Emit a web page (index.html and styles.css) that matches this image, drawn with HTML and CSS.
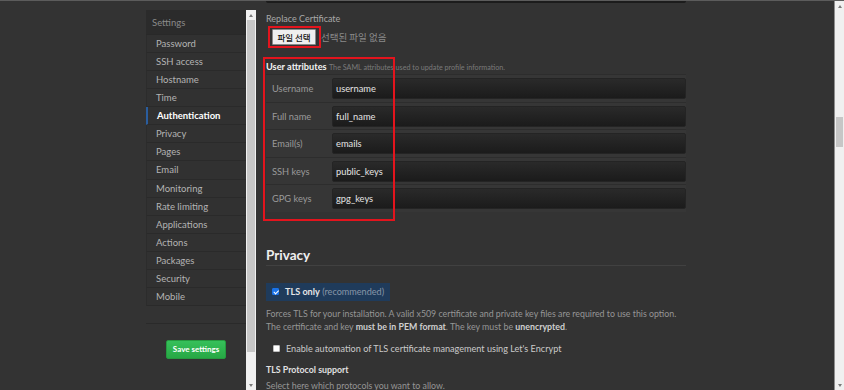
FILE: index.html
```html
<!DOCTYPE html>
<html lang="en">
<head>
<meta charset="utf-8">
<title>Settings - Authentication</title>
<link rel="stylesheet" href="styles.css">
</head>
<body>
<div class="page">
  <div class="main">
    <div class="gutter"></div>
    <aside class="side">
      <nav class="menu">
        <div class="menu-head">Settings</div>
        <a class="item">Password</a>
        <a class="item">SSH access</a>
        <a class="item">Hostname</a>
        <a class="item">Time</a>
        <a class="item active">Authentication</a>
        <a class="item">Privacy</a>
        <a class="item">Pages</a>
        <a class="item">Email</a>
        <a class="item">Monitoring</a>
        <a class="item">Rate limiting</a>
        <a class="item">Applications</a>
        <a class="item">Actions</a>
        <a class="item">Packages</a>
        <a class="item">Security</a>
        <a class="item">Mobile</a>
      </nav>
      <div class="side-foot"><button class="save">Save settings</button></div>
    </aside>
    <div class="sbar sbar-side">
      <div class="sbar-btn"><span class="tri up"></span></div>
      <div class="sbar-thumb side-thumb"></div>
      <div class="sbar-track"></div>
      <div class="sbar-btn"><span class="tri down"></span></div>
    </div>
    <section class="content">
      <div class="prev-input"></div>
      <div class="field-label">Replace Certificate</div>
      <div class="file-row">
        <span class="mark-box"><button class="file-btn">파일 선택</button></span>
        <span class="file-none">선택된 파일 없음</span>
      </div>
      <div class="attrs">
        <div class="attrs-title"><strong>User attributes</strong> <span class="note">The SAML attributes used to update profile information.</span></div>
        <div class="attr-row"><span class="attr-label">Username</span><span class="attr-input">username</span></div>
        <div class="attr-row"><span class="attr-label">Full name</span><span class="attr-input">full_name</span></div>
        <div class="attr-row"><span class="attr-label">Email(s)</span><span class="attr-input">emails</span></div>
        <div class="attr-row"><span class="attr-label">SSH keys</span><span class="attr-input">public_keys</span></div>
        <div class="attr-row"><span class="attr-label">GPG keys</span><span class="attr-input">gpg_keys</span></div>
        <div class="mark-overlay"></div>
      </div>
      <h2 class="section-title">Privacy</h2>
      <div class="tls-box"><span class="cb checked"></span><strong>TLS only</strong>&nbsp;<span class="rec">(recommended)</span></div>
      <p class="desc">Forces TLS for your installation. A valid x509 certificate and private key files are required to use this option.<br>The certificate and key <b>must be in PEM format</b>. The key must be <b>unencrypted</b>.</p>
      <div class="check-row"><span class="cb"></span>Enable automation of TLS certificate management using Let's Encrypt</div>
      <div class="sub-title">TLS Protocol support</div>
      <div class="desc small">Select here which protocols you want to allow.</div>
    </section>
  </div>
  <div class="sbar sbar-page">
    <div class="sbar-btn"><span class="tri up"></span></div>
    <div class="page-track-top"></div>
    <div class="sbar-thumb page-thumb"></div>
    <div class="sbar-track"></div>
    <div class="sbar-btn"><span class="tri down"></span></div>
  </div>
</div>
</body>
</html>
```

FILE: styles.css
```css
* { box-sizing: border-box; }
html, body { margin: 0; padding: 0; height: 100%; overflow: hidden; }
body {
  background: #333;
  font-family: Lato, "Noto Sans CJK KR", sans-serif;
  color: #bbb;
}
.page {
  display: flex;
  height: 390px;
  border-top: 1px solid #5c5c5c;
}
.main {
  flex: 1;
  display: flex;
  align-items: stretch;
  min-width: 0;
}
.gutter { width: 146px; flex: none; }

/* sidebar */
.side {
  width: 100px;
  flex: none;
  margin-top: 9px;
  display: flex;
  flex-direction: column;
}
.menu {
  display: flex;
  flex-direction: column;
  background: #313131;
}
.menu-head {
  height: 25px;
  line-height: 25px;
  padding-left: 6px;
  font-size: 9.5px;
  color: #8a8a8a;
  background: #2b2b2b;
  border-bottom: 1px solid #292929;
}
.item {
  height: 18.07px;
  line-height: 17px;
  padding-left: 9px;
  font-size: 9.5px;
  color: #b4b4b4;
  border-bottom: 1px solid #2a2a2a;
  border-left: 1px solid #2c2c2c;
}
.item.active {
  border-left: 2px solid #2a5d9e;
  color: #fff;
  font-weight: 700;
  padding-left: 9px;
}
.side-foot {
  margin-top: 17px;
  border-top: 1px solid #2a2a2a;
  padding-top: 16px;
  display: flex;
  justify-content: center;
}
.save {
  width: 60px;
  height: 19px;
  padding: 0;
  border: 1px solid #259a3f;
  border-radius: 2px;
  background: linear-gradient(#36c05a, #27a845);
  color: #fff;
  font-family: Lato, sans-serif;
  font-weight: 700;
  font-size: 8px;
}

/* scrollbars */
.sbar {
  width: 10px;
  flex: none;
  display: flex;
  flex-direction: column;
  background: #f0f0f0;
}
.sbar-side { margin-top: 9px; }
.sbar-page {
  border-left: 1px solid #8e8e8e;
  width: 10px;
}
.sbar-btn {
  height: 10px;
  flex: none;
  display: flex;
  align-items: center;
  justify-content: center;
}
.tri {
  width: 0; height: 0;
  border-left: 2.5px solid transparent;
  border-right: 2.5px solid transparent;
}
.tri.up { border-bottom: 3px solid #7a7a7a; }
.tri.down { border-top: 3px solid #7a7a7a; }
.sbar-thumb {
  background: #c6c6c6;
  margin: 0 1px;
  flex: none;
}
.side-thumb { height: 332px; }
.sbar-track { flex: 1; }
.page-track-top { height: 106px; flex: none; }
.page-thumb { height: 30px; }

/* content */
.content {
  width: 420px;
  flex: none;
  margin-left: 10px;
  font-size: 9px;
}
.prev-input {
  height: 2px;
  background: #1c1c1c;
  border-radius: 0 0 2px 2px;
}
.field-label {
  margin-top: 9px;
  line-height: 13px;
  font-size: 9px;
  color: #a8a8a8;
}
.file-row {
  display: flex;
  align-items: center;
  margin-top: 1px;
}
.mark-box {
  margin-left: 2px;
  border: 2px solid #e3141d;
  padding: 1px 3px 1px 2px;
  display: flex;
}
.file-btn {
  width: 44px;
  height: 16px;
  padding: 0;
  background: #efefef;
  border: 1px solid #8a8a8a;
  border-radius: 1px;
  font-family: "Noto Sans CJK KR", sans-serif;
  font-size: 8.5px;
  font-weight: 500;
  color: #111;
  line-height: 14px;
}
.file-none {
  font-family: "Noto Sans CJK KR", sans-serif;
  font-size: 9.5px;
  color: #8a8a8a;
}

.attrs {
  position: relative;
  margin-top: 12px;
  padding-bottom: 9px;
}
.attrs-title {
  line-height: 13px;
  font-size: 9.2px;
  white-space: nowrap;
}
.attrs-title strong { color: #f2f2f2; font-weight: 700; }
.attrs-title .note { color: #7a7a7a; font-size: 7.2px; }
.attr-row {
  display: flex;
  align-items: stretch;
  height: 27.5px;
  padding: 3px 0 2.5px;
  border-top: 1px solid #2d2d2d;
  background: #363636;
}
.attr-label {
  width: 66px;
  flex: none;
  padding-left: 6px;
  display: flex;
  align-items: center;
  color: #9a9a9a;
  font-size: 9.3px;
}
.attr-input {
  flex: 1;
  display: flex;
  align-items: center;
  padding-left: 3px;
  background: linear-gradient(#2a2a2a, #1b1b1b);
  border: 1px solid #242424;
  border-radius: 2px;
  color: #e4e4e4;
  font-size: 9.3px;
}
.mark-overlay {
  position: absolute;
  left: -3px;
  top: -3px;
  width: 132px;
  bottom: 0;
  border: 2px solid #e3141d;
  pointer-events: none;
}

.section-title {
  margin: 24px 0 0;
  font-size: 13.5px;
  font-weight: 700;
  line-height: 20px;
  color: #efefef;
  border-bottom: 1px solid #414141;
}
.tls-box {
  margin-top: 17px;
  width: 124px;
  height: 18px;
  display: flex;
  align-items: center;
  padding-left: 6px;
  background: #1f3b5b;
  font-size: 9.1px;
  color: #e6e6e6;
  white-space: nowrap;
}
.tls-box strong { font-weight: 700; }
.rec { color: #8796a8; }
.cb {
  width: 7px;
  height: 7px;
  flex: none;
  margin-right: 6px;
  background: #fff;
  border: 1px solid #bdbdbd;
  border-radius: 1px;
}
.cb.checked {
  background: #1a73e8;
  border-color: #1a73e8;
  position: relative;
}
.cb.checked::after {
  content: "";
  position: absolute;
  left: 1.5px;
  top: 0;
  width: 1.5px;
  height: 3.5px;
  border-right: 1px solid #fff;
  border-bottom: 1px solid #fff;
  transform: rotate(45deg);
}
.desc {
  margin: 6px 0 0;
  line-height: 13px;
  font-size: 8.8px;
  color: #969696;
  white-space: nowrap;
}
.desc b { color: #cfcfcf; font-weight: 700; }
.check-row {
  margin-top: 9px;
  padding-left: 7px;
  display: flex;
  align-items: center;
  line-height: 13px;
  font-size: 9.1px;
  color: #cacaca;
  white-space: nowrap;
}
.sub-title {
  margin-top: 8px;
  line-height: 13px;
  font-size: 8.8px;
  font-weight: 700;
  color: #e0e0e0;
}
.desc.small { margin-top: 3px; }
```
